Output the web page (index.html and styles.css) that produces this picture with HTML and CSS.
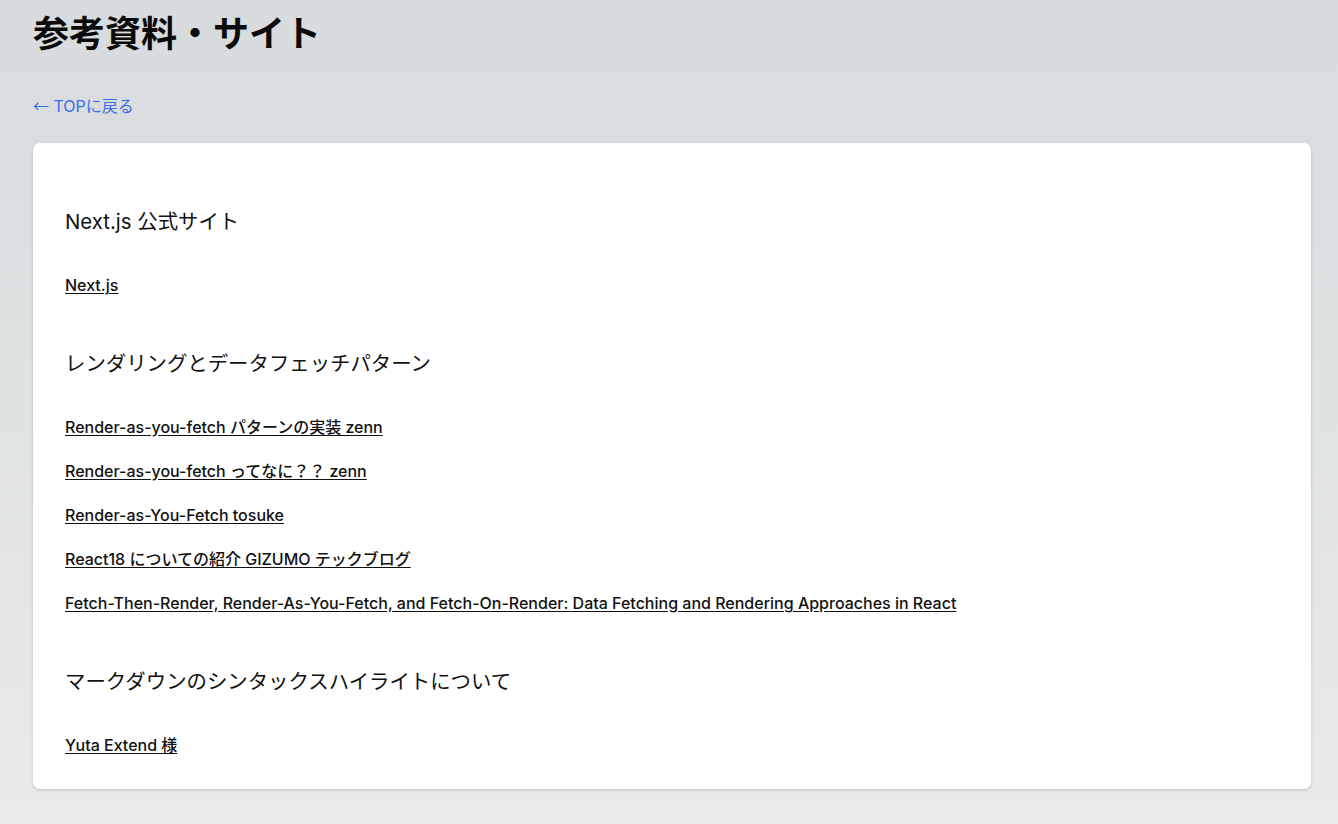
FILE: index.html
```html
<!DOCTYPE html>
<html lang="ja">
<head>
<meta charset="utf-8">
<title>参考資料・サイト</title>
<link rel="stylesheet" href="styles.css">
</head>
<body>
<main class="page">
  <h1 class="title">参考資料・サイト</h1>
  <a class="back" href="#"><span class="arrow">←</span> TOPに戻る</a>
  <div class="card">
    <section class="section">
      <h2 class="heading">Next.js 公式サイト</h2>
      <ul class="links">
        <li><a href="#">Next.js</a></li>
      </ul>
    </section>
    <section class="section">
      <h2 class="heading">レンダリングとデータフェッチパターン</h2>
      <ul class="links">
        <li><a href="#">Render-as-you-fetch パターンの実装 zenn</a></li>
        <li><a href="#">Render-as-you-fetch ってなに？？ zenn</a></li>
        <li><a href="#">Render-as-You-Fetch tosuke</a></li>
        <li><a href="#">React18 についての紹介 GIZUMO テックブログ</a></li>
        <li><a href="#">Fetch-Then-Render, Render-As-You-Fetch, and Fetch-On-Render: Data Fetching and Rendering Approaches in React</a></li>
      </ul>
    </section>
    <section class="section">
      <h2 class="heading">マークダウンのシンタックスハイライトについて</h2>
      <ul class="links">
        <li><a href="#">Yuta Extend 様</a></li>
      </ul>
    </section>
  </div>
</main>
</body>
</html>
```
FILE: styles.css
```css
html, body {
  margin: 0;
  padding: 0;
}
body {
  min-height: 824px;
  background: linear-gradient(180deg, #d7dbdd 0%, #e9eaea 100%);
  font-family: Inter, "Noto Sans CJK JP", sans-serif;
  color: #111;
}
.page {
  padding: 12px 27px 0 33px;
  display: flex;
  flex-direction: column;
  align-items: flex-start;
}
.title {
  margin: 0;
  font-size: 36px;
  line-height: 44px;
  font-weight: 700;
  color: #0b0b0b;
}
.back {
  margin-top: 37px;
  font-size: 16px;
  line-height: 24px;
  color: #3c6ee6;
  text-decoration: none;
}
.arrow {
  font-family: "Noto Sans CJK JP", sans-serif;
}
.card {
  align-self: stretch;
  margin-top: 25px;
  background: #fff;
  border-radius: 7px;
  box-shadow: 0 1px 3px rgba(0,0,0,0.18);
  padding: 32px 32px 32px;
  display: flex;
  flex-direction: column;
  gap: 20px;
}
.section {
  padding-top: 33px;
  display: flex;
  flex-direction: column;
}
.heading {
  margin: 0 0 37px;
  font-size: 20.4px;
  line-height: 28px;
  font-weight: 400;
  color: #111;
}
.links {
  list-style: none;
  margin: 0;
  padding: 0;
  display: flex;
  flex-direction: column;
  gap: 20px;
}
.links li {
  font-size: 16px;
  line-height: 24px;
}
.links a {
  color: #111;
  font-weight: 500;
  text-decoration: underline;
  text-underline-offset: 2px;
}
```
